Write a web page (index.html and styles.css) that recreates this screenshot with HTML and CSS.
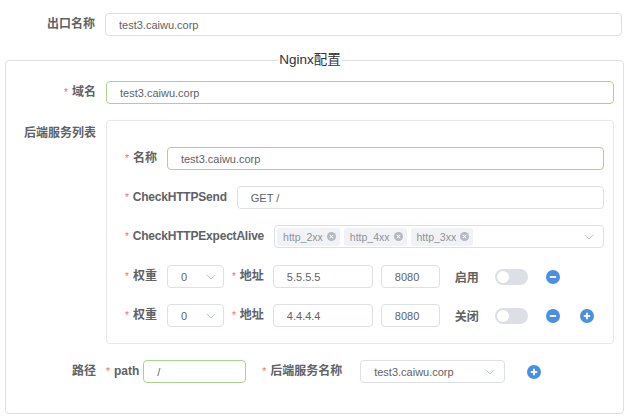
FILE: index.html
```html
<!DOCTYPE html>
<html lang="zh-CN">
<head>
    <meta charset="UTF-8">
    <meta name="viewport" content="width=device-width, initial-scale=1.0">
    <title>出口配置</title>
    <link rel="stylesheet" href="styles.css">
</head>
<body>
    <div class="page">
        <div class="form-item top">
            <label class="label">出口名称</label>
            <input class="input grow" type="text" value="test3.caiwu.corp" readonly>
        </div>

        <fieldset class="nginx">
            <legend>Nginx配置</legend>

            <div class="form-item">
                <label class="label req">域名</label>
                <input class="input grow success" type="text" value="test3.caiwu.corp" readonly>
            </div>

            <div class="form-item backend-item">
                <label class="label list-label">后端服务列表</label>
                <div class="backend">
                    <div class="row">
                        <label class="sub-label req">名称</label>
                        <input class="input grow success" type="text" value="test3.caiwu.corp" readonly>
                    </div>
                    <div class="row">
                        <label class="sub-label req latin">CheckHTTPSend</label>
                        <input class="input grow" type="text" value="GET /" readonly>
                    </div>
                    <div class="row alive">
                        <label class="sub-label req latin">CheckHTTPExpectAlive</label>
                        <div class="select grow success tags">
                            <span class="tag">http_2xx<i class="tag-close"></i></span>
                            <span class="tag">http_4xx<i class="tag-close"></i></span>
                            <span class="tag">http_3xx<i class="tag-close"></i></span>
                            <svg class="arrow" width="10" height="6" viewBox="0 0 10 6"><polyline points="1,1 5,5 9,1" fill="none" stroke="#c0c4cc" stroke-width="1"/></svg>
                        </div>
                    </div>
                    <div class="row">
                        <label class="sub-label req">权重</label>
                        <div class="select weight">
                            <span>0</span>
                            <svg class="arrow" width="10" height="6" viewBox="0 0 10 6"><polyline points="1,1 5,5 9,1" fill="none" stroke="#c0c4cc" stroke-width="1"/></svg>
                        </div>
                        <label class="sub-label req addr-label">地址</label>
                        <input class="input host" type="text" value="5.5.5.5" readonly>
                        <input class="input port" type="text" value="8080" readonly>
                        <span class="state">启用</span>
                        <span class="switch"></span>
                        <svg class="icon-btn" width="14" height="14" viewBox="0 0 14 14"><circle cx="7" cy="7" r="7" fill="#4a90e2"/><line x1="3.8" y1="7" x2="10.2" y2="7" stroke="#fff" stroke-width="1.8"/></svg>
                    </div>
                    <div class="row">
                        <label class="sub-label req">权重</label>
                        <div class="select weight">
                            <span>0</span>
                            <svg class="arrow" width="10" height="6" viewBox="0 0 10 6"><polyline points="1,1 5,5 9,1" fill="none" stroke="#c0c4cc" stroke-width="1"/></svg>
                        </div>
                        <label class="sub-label req addr-label">地址</label>
                        <input class="input host" type="text" value="4.4.4.4" readonly>
                        <input class="input port" type="text" value="8080" readonly>
                        <span class="state">关闭</span>
                        <span class="switch"></span>
                        <svg class="icon-btn" width="14" height="14" viewBox="0 0 14 14"><circle cx="7" cy="7" r="7" fill="#4a90e2"/><line x1="3.8" y1="7" x2="10.2" y2="7" stroke="#fff" stroke-width="1.8"/></svg>
                        <svg class="icon-btn add" width="14" height="14" viewBox="0 0 14 14"><circle cx="7" cy="7" r="7" fill="#4a90e2"/><line x1="3.8" y1="7" x2="10.2" y2="7" stroke="#fff" stroke-width="1.8"/><line x1="7" y1="3.8" x2="7" y2="10.2" stroke="#fff" stroke-width="1.8"/></svg>
                    </div>
                </div>
            </div>

            <div class="form-item path-item">
                <label class="label">路径</label>
                <label class="sub-label req path-label">path</label>
                <input class="input success path" type="text" value="/" readonly>
                <label class="sub-label req service-label">后端服务名称</label>
                <div class="select success service">
                    <span>test3.caiwu.corp</span>
                    <svg class="arrow" width="10" height="6" viewBox="0 0 10 6"><polyline points="1,1 5,5 9,1" fill="none" stroke="#c0c4cc" stroke-width="1"/></svg>
                </div>
                <svg class="icon-btn path-add" width="14" height="14" viewBox="0 0 14 14"><circle cx="7" cy="7" r="7" fill="#4a90e2"/><line x1="3.8" y1="7" x2="10.2" y2="7" stroke="#fff" stroke-width="1.8"/><line x1="7" y1="3.8" x2="7" y2="10.2" stroke="#fff" stroke-width="1.8"/></svg>
            </div>
        </fieldset>
    </div>
</body>
</html>
```

FILE: styles.css
```css
body {
    margin: 0;
    font-family: "Liberation Sans", "Noto Sans CJK SC", sans-serif;
    font-size: 12px;
    color: #606266;
    background-color: #fff;
}

.page {
    padding-top: 13px;
}

.form-item {
    display: flex;
    align-items: center;
}

.top {
    margin-right: 18px;
}

.label {
    flex-shrink: 0;
    width: 100px;
    padding-right: 10px;
    box-sizing: border-box;
    text-align: right;
    font-weight: bold;
    line-height: 23px;
}

.top .label {
    width: 105px;
}

.req::before {
    content: "*";
    color: #f56c6c;
    margin-right: 4px;
    font-size: 10px;
    font-weight: normal;
}

.grow {
    flex: 1;
    min-width: 0;
}

.input {
    height: 23px;
    box-sizing: border-box;
    border: 1px solid #dcdfe6;
    border-radius: 4px;
    padding: 0 13px;
    font-family: "Liberation Sans", "Noto Sans CJK SC", sans-serif;
    font-size: 11px;
    color: #606266;
    background-color: #fff;
    outline: none;
}

.success {
    border-color: #a8d48f;
}

/* fieldset */
.nginx {
    margin: 15px 16px 5px 5px;
    padding: 12px 9px 30px 0;
    border: 1px solid #dcdfe6;
    border-radius: 4px;
    min-inline-size: 0;
}

.nginx legend {
    margin: 0 auto;
    padding: 0 1px;
    font-size: 13.5px;
    line-height: 18px;
    color: #303133;
}

.backend-item {
    align-items: flex-start;
    margin-top: 16px;
}

.list-label {
    padding-top: 2px;
}

.backend {
    flex: 1;
    border: 1px solid #e4e7ed;
    border-radius: 4px;
    padding: 26px 9px 0 18px;
}

.row {
    display: flex;
    align-items: center;
    margin-bottom: 16px;
}

.row.alive {
    margin-bottom: 17px;
}

.sub-label {
    flex-shrink: 0;
    padding-right: 10px;
    font-weight: bold;
    white-space: nowrap;
    line-height: 23px;
}

.latin {
    letter-spacing: -0.2px;
}

/* selects */
.select {
    display: flex;
    align-items: center;
    height: 23px;
    box-sizing: border-box;
    border: 1px solid #dcdfe6;
    border-radius: 4px;
    padding: 0 9px 0 13px;
    font-size: 11px;
    color: #606266;
    background-color: #fff;
}

.select span {
    flex: 1;
}

.select .arrow {
    flex-shrink: 0;
}

.tags {
    padding-left: 2px;
}

.tag {
    display: inline-flex;
    align-items: center;
    flex: none !important;
    height: 18px;
    margin-right: 4px;
    padding: 0 4px 0 6px;
    border-radius: 3px;
    background-color: #f0f2f5;
    color: #909399;
    font-size: 10.5px;
}

.tag:nth-child(3) {
    margin-right: auto;
}

.tag-close {
    display: inline-block;
    position: relative;
    width: 9px;
    height: 9px;
    margin-left: 4px;
    border-radius: 50%;
    background-color: #b4b8bf;
}

.tag-close::before,
.tag-close::after {
    content: "";
    position: absolute;
    left: 2px;
    top: 4px;
    width: 5px;
    height: 1px;
    background-color: #fff;
    transform: rotate(45deg);
}

.tag-close::after {
    transform: rotate(-45deg);
}

.weight {
    width: 57px;
    padding-right: 7px;
}

.addr-label {
    margin-left: 8px;
    padding-right: 9px;
}

.host {
    width: 100px;
}

.port {
    width: 59px;
    margin-left: 8px;
}

.state {
    margin-left: 15px;
    font-weight: bold;
}

.switch {
    position: relative;
    width: 33px;
    height: 16px;
    margin-left: 16px;
    border-radius: 8px;
    background-color: #dcdfe6;
}

.switch::after {
    content: "";
    position: absolute;
    left: 2px;
    top: 2px;
    width: 12px;
    height: 12px;
    border-radius: 50%;
    background-color: #fff;
}

.icon-btn {
    flex-shrink: 0;
    margin-left: 18px;
}

.icon-btn.add {
    margin-left: 20px;
}

/* path row */
.path-item {
    margin-top: 16px;
}

.path-label {
    padding-right: 4px;
}

.path {
    width: 103px;
}

.service-label {
    margin-left: 16px;
    padding-right: 18px;
}

.service {
    width: 145px;
}

.path-add {
    margin-left: 22px;
}
```
